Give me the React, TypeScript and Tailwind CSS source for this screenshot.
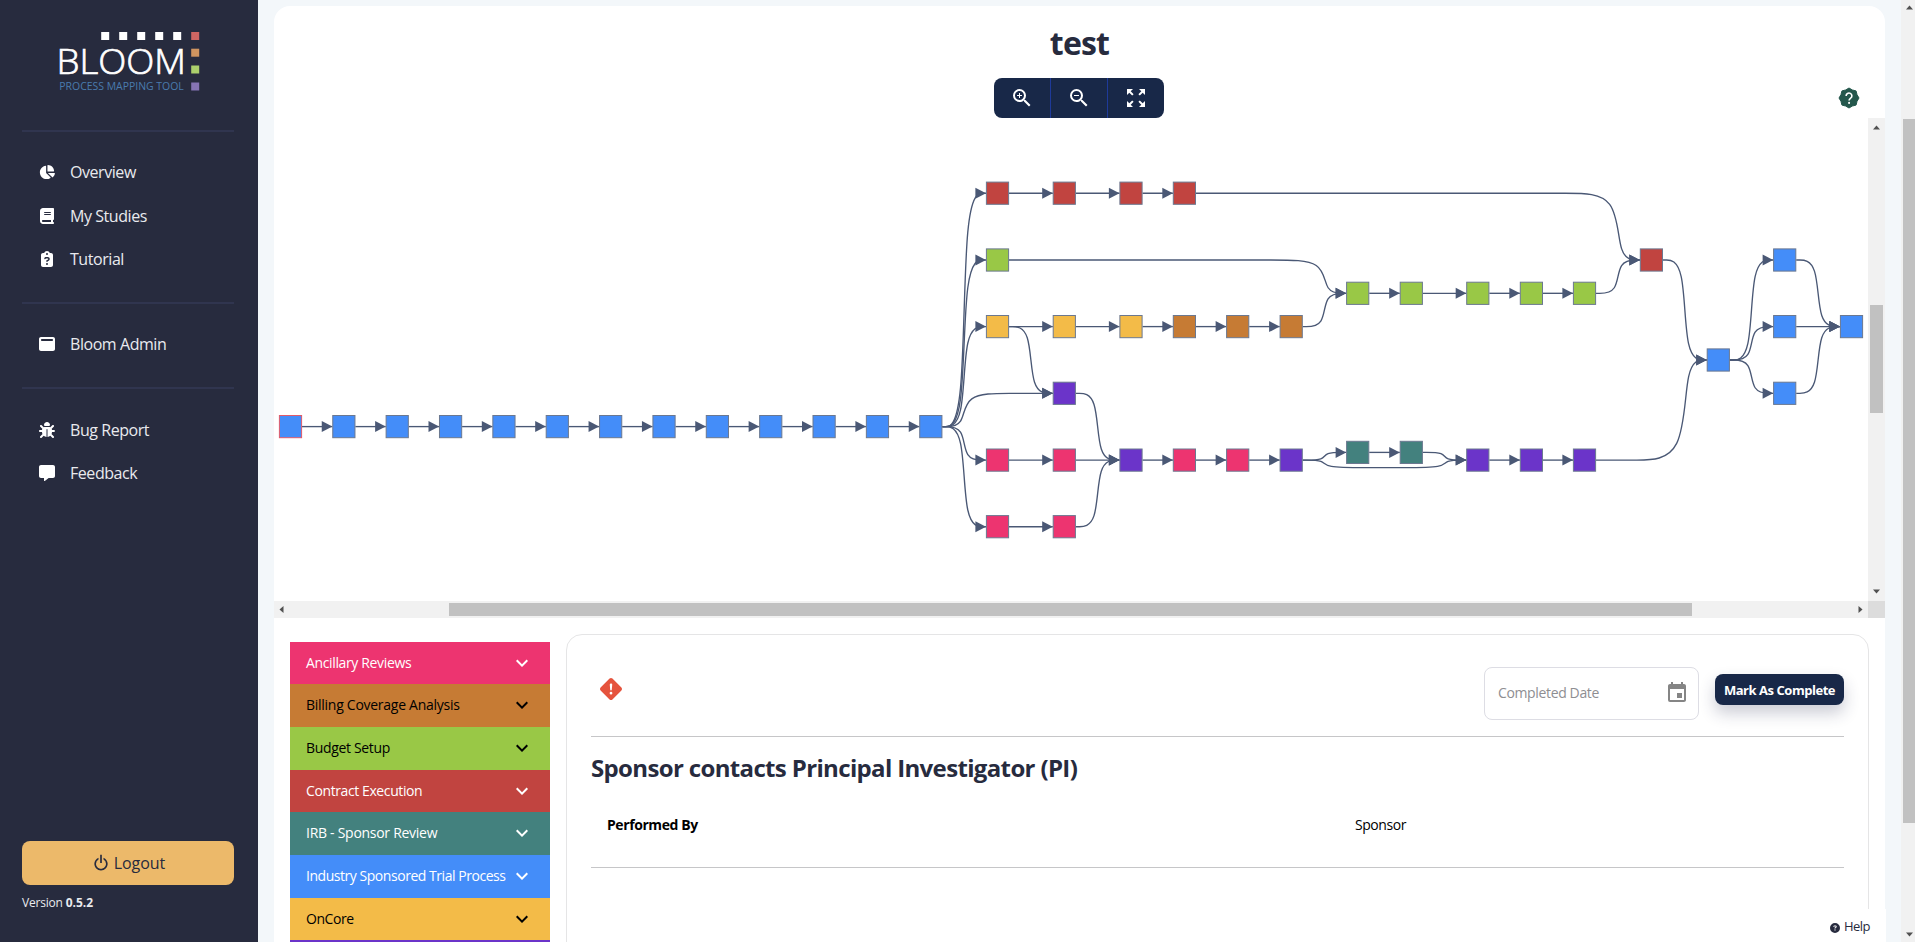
import React from "react";
import type { IconType } from "react-icons";
import {
  FaBook,
  FaBug,
  FaChartPie,
  FaCircleQuestion,
  FaClipboardQuestion,
  FaMessage,
  FaWindowMaximize,
} from "react-icons/fa6";
import { BsExclamationDiamondFill } from "react-icons/bs";
import { BiPowerOff } from "react-icons/bi";
import { MdEvent, MdExpandMore, MdZoomIn, MdZoomOut, MdZoomOutMap } from "react-icons/md";

type NavItem = { label: string; Icon: IconType };

const NAV_GROUPS: NavItem[][] = [
  [
    { label: "Overview", Icon: FaChartPie },
    { label: "My Studies", Icon: FaBook },
    { label: "Tutorial", Icon: FaClipboardQuestion },
  ],
  [{ label: "Bloom Admin", Icon: FaWindowMaximize }],
  [
    { label: "Bug Report", Icon: FaBug },
    { label: "Feedback", Icon: FaMessage },
  ],
];

const CATEGORIES = [
  { label: "Ancillary Reviews", style: "h-[42px] bg-[#ed3470] text-white tracking-[-0.36px]" },
  { label: "Billing Coverage Analysis", style: "h-[43px] pb-px bg-[#c67b34] text-black tracking-[-0.27px]" },
  { label: "Budget Setup", style: "h-[43px] pb-px bg-[#99c846] text-black tracking-[-0.34px]" },
  { label: "Contract Execution", style: "h-[42px] bg-[#c14440] text-white tracking-[-0.4px]" },
  { label: "IRB - Sponsor Review", style: "h-[43px] pb-px bg-[#43817e] text-white tracking-[-0.28px]" },
  { label: "Industry Sponsored Trial Process", style: "h-[43px] pb-px bg-[#448df9] text-white tracking-[-0.46px]" },
  { label: "OnCore", style: "h-[42px] bg-[#f3bb48] text-black tracking-[-0.45px]" },
];

function Logo() {
  const white = [105, 123, 141, 159, 177];
  const tail = [
    { y: 36, c: "#cf6663" },
    { y: 52.7, c: "#cf9460" },
    { y: 69.5, c: "#abcf6c" },
    { y: 86.5, c: "#8674b4" },
  ];
  return (
    <svg className="h-[130px] w-[258px] shrink-0" viewBox="0 0 258 130">
      {white.map((x) => (
        <rect key={x} x={x - 3.8} y={32} width={8} height={8} fill="#fff" />
      ))}
      {tail.map((s) => (
        <rect key={s.y} x={191.2} y={s.y - 4} width={8} height={8} fill={s.c} />
      ))}
      <text x="56.5" y="74.2" fontFamily="Open Sans" fontWeight="300" fontSize="34.5" textLength="129.5" lengthAdjust="spacingAndGlyphs" fill="#fff" stroke="#fff" strokeWidth="0.7">
        BLOOM
      </text>
      <text x="59.3" y="90.2" fontFamily="Open Sans" fontWeight="400" fontSize="11" textLength="124.5" lengthAdjust="spacingAndGlyphs" fill="#4a7bae">
        PROCESS MAPPING TOOL
      </text>
    </svg>
  );
}

function Sidebar() {
  return (
    <aside className="flex h-full w-[258px] shrink-0 flex-col bg-[#272b3e]">
      <Logo />
      <nav className="flex flex-col pr-6 pl-[22px]">
        {NAV_GROUPS.map((group, i) => (
          <div key={i} className="flex flex-col border-t-2 border-[#30354f] pt-[18.5px] pb-[21.2px]">
            {group.map(({ label, Icon }) => (
              <a key={label} className="flex h-[43.5px] items-center pl-[17px] text-base text-[#e9eaee]">
                <Icon className="h-4 w-4 text-white" />
                <span className="ml-[15px] tracking-[-0.44px]">{label}</span>
              </a>
            ))}
          </div>
        ))}
      </nav>
      <div className="mt-auto flex flex-col pr-6 pb-[29px] pl-[22px]">
        <button className="flex h-11 items-center justify-center gap-[3px] rounded-lg bg-[#ecb96a] text-base font-medium text-[#272b3e]">
          <BiPowerOff className="h-5 w-5" />
          <span className="tracking-[-0.05px]">Logout</span>
        </button>
        <p className="mt-2 text-xs leading-5 font-medium tracking-[-0.2px] text-[#e9eaee]">
          Version <span className="font-bold tracking-normal">0.5.2</span>
        </p>
      </div>
    </aside>
  );
}

const COLORS = {
  blue: "#448df9",
  red: "#c14440",
  lime: "#99c846",
  amber: "#f3bb48",
  brown: "#c67b34",
  violet: "#6b34c9",
  pink: "#ed3470",
  teal: "#43817e",
};

type StepNode = { x: number; y: number; color: keyof typeof COLORS };

const row = (color: keyof typeof COLORS, y: number, xs: number[]): StepNode[] =>
  xs.map((x) => ({ x, y, color }));

const TRUNK = Array.from({ length: 13 }, (_, i) => 290.5 + i * 53.36);

const NODES: StepNode[] = [
  ...row("blue", 426.6, TRUNK),
  ...row("red", 193.2, [997.5, 1064.3, 1131, 1184.4]),
  ...row("red", 260, [1651.4]),
  ...row("lime", 260, [997.5]),
  ...row("lime", 293.3, [1357.7, 1411.3, 1477.8, 1531.4, 1584.5]),
  ...row("amber", 326.6, [997.5, 1064.3, 1131]),
  ...row("brown", 326.6, [1184.4, 1237.7, 1291.2]),
  ...row("violet", 393.3, [1064.3]),
  ...row("pink", 460.1, [997.5, 1064.3]),
  ...row("violet", 460.1, [1131]),
  ...row("pink", 460.1, [1184.4, 1237.7]),
  ...row("violet", 460.1, [1291.2, 1477.8, 1531.4, 1584.5]),
  ...row("pink", 526.7, [997.5, 1064.3]),
  ...row("teal", 452.4, [1357.7, 1411.3]),
  ...row("blue", 360, [1718.3]),
  ...row("blue", 260, [1784.7]),
  ...row("blue", 326.6, [1784.7, 1851.5]),
  ...row("blue", 393.3, [1784.7]),
];

type Point = [number, number];

/** Uniform cubic B-spline through the control polygon, clamped at both ends. */
function basis(points: Point[]): string {
  const at = (i: number) => points[Math.max(0, Math.min(points.length - 1, i))];
  let d = `M${points[0][0]},${points[0][1]}`;
  for (let i = 0; i < points.length; i++) {
    const [a, b, c] = [at(i - 1), at(i), at(i + 1)];
    if (i === 0) {
      d += `L${(5 * b[0] + c[0]) / 6},${(5 * b[1] + c[1]) / 6}`;
      continue;
    }
    d += `C${(2 * a[0] + b[0]) / 3},${(2 * a[1] + b[1]) / 3} ${(a[0] + 2 * b[0]) / 3},${(a[1] + 2 * b[1]) / 3} ${(a[0] + 4 * b[0] + c[0]) / 6},${(a[1] + 4 * b[1] + c[1]) / 6}`;
  }
  const end = points[points.length - 1];
  return `${d}L${end[0]},${end[1]}`;
}

const R = 11.5;
const straight = (xs: number[], y: number): Point[][] =>
  xs.slice(1).map((x, i) => [
    [xs[i] + R, y],
    [x - R, y],
  ]);
const step = (x0: number, y0: number, x1: number, y1: number): Point[] => {
  const xm = (x0 + x1) / 2;
  return [[x0 + R, y0], [xm, y0], [xm, y1], [x1 - R, y1]];
};

const FORK = 930.8;

const EDGES: Point[][] = [
  ...straight(TRUNK, 426.6),
  ...straight([997.5, 1064.3, 1131, 1184.4], 193.2),
  ...straight([1357.7, 1411.3, 1477.8, 1531.4, 1584.5], 293.3),
  ...straight([997.5, 1064.3, 1131, 1184.4, 1237.7, 1291.2], 326.6),
  ...straight([997.5, 1064.3, 1131, 1184.4, 1237.7, 1291.2], 460.1),
  ...straight([1477.8, 1531.4, 1584.5], 460.1),
  ...straight([1357.7, 1411.3], 452.4),
  ...straight([997.5, 1064.3], 526.7),
  ...straight([1784.7, 1851.5], 326.6),
  step(FORK, 426.6, 997.5, 193.2),
  step(FORK, 426.6, 997.5, 260),
  step(FORK, 426.6, 997.5, 326.6),
  step(FORK, 426.6, 997.5, 460.1),
  step(FORK, 426.6, 997.5, 526.7),
  [[FORK + R, 426.6], [964.2, 426.6], [964.2, 393.3], [1010, 393.3], [1052.8, 393.3]],
  step(997.5, 326.6, 1064.3, 393.3),
  step(1064.3, 393.3, 1131, 460.1),
  step(1064.3, 526.7, 1131, 460.1),
  [[1195.9, 193.2], [1500, 193.2], [1568, 193.2], [1618, 193.2], [1618, 260], [1639.9, 260]],
  [[1009, 260], [1200, 260], [1275, 260], [1324.5, 260], [1324.5, 293.3], [1346.2, 293.3]],
  step(1291.2, 326.6, 1357.7, 293.3),
  step(1291.2, 460.1, 1357.7, 452.4),
  [[1302.7, 460.1], [1324.5, 460.1], [1324.5, 467.6], [1366, 467.6], [1403, 467.6], [1444.5, 467.6], [1444.5, 460.1], [1466.3, 460.1]],
  step(1411.3, 452.4, 1477.8, 460.1),
  step(1584.5, 293.3, 1651.4, 260),
  step(1651.4, 260, 1718.3, 360),
  [[1596, 460.1], [1635, 460.1], [1685, 460.1], [1685, 360], [1706.8, 360]],
  step(1718.3, 360, 1784.7, 260),
  step(1718.3, 360, 1784.7, 326.6),
  step(1718.3, 360, 1784.7, 393.3),
  step(1784.7, 260, 1851.5, 326.6),
  step(1784.7, 393.3, 1851.5, 326.6),
];

function ProcessGraph() {
  return (
    <svg className="block h-[483px] w-[1594px]" viewBox="274 118 1594 483">
      <g fill="none" stroke="#4a5875" strokeWidth="1.35">
        {EDGES.map((points, i) => (
          <path key={i} d={basis(points)} />
        ))}
      </g>
      <g fill="#4a5875">
        {EDGES.map((points, i) => {
          const [x, y] = points[points.length - 1];
          return <path key={i} d={`M${x},${y}l-10.6,-5.5v11z`} />;
        })}
      </g>
      <g strokeWidth="1">
        {NODES.map((n, i) => (
          <rect key={i} x={n.x - 11.1} y={n.y - 11.1} width={22.2} height={22.2} fill={COLORS[n.color]} stroke={i === 0 ? "#e05a6a" : "#6b7890"} />
        ))}
      </g>
    </svg>
  );
}

function Arrow({ points }: { points: string }) {
  return (
    <svg className="h-[9px] w-[9px] shrink-0" viewBox="0 0 9 9">
      <polygon points={points} fill="#505050" />
    </svg>
  );
}

const UP = "1,6.5 4.5,2.5 8,6.5";
const DOWN = "1,2.5 4.5,6.5 8,2.5";
const LEFT = "6.5,1 2.5,4.5 6.5,8";
const RIGHT = "2.5,1 6.5,4.5 2.5,8";

function GraphArea() {
  return (
    <div className="flex h-[500px] shrink-0 flex-col">
      <div className="flex">
        <ProcessGraph />
        <div className="flex h-[483px] w-[17px] flex-col items-center bg-[#f1f1f1] pt-[5px] pb-[5px]">
          <Arrow points={UP} />
          <div className="mt-[173px] h-[108px] w-[13px] bg-[#c1c1c1]" />
          <div className="mt-auto">
            <Arrow points={DOWN} />
          </div>
        </div>
      </div>
      <div className="flex h-[17px]">
        <div className="flex w-[1594px] items-center justify-between bg-[#f1f1f1] pr-[3px] pl-[3px]">
          <div className="flex items-center">
            <Arrow points={LEFT} />
            <div className="ml-[163px] h-[13px] w-[1243px] bg-[#c1c1c1]" />
          </div>
          <Arrow points={RIGHT} />
        </div>
        <div className="w-[17px] bg-[#dcdcdc]" />
      </div>
    </div>
  );
}

function HelpBadge() {
  const outline = Array.from({ length: 16 }, (_, i) => {
    const a = (i * Math.PI) / 8 - Math.PI / 2;
    const r = i % 2 === 0 ? 10 : 8.7;
    return `${(11 + r * Math.cos(a)).toFixed(2)},${(11 + r * Math.sin(a)).toFixed(2)}`;
  }).join(" ");
  return (
    <svg className="h-[22px] w-[22px]" viewBox="0 0 22 22">
      <polygon points={outline} fill="#24574c" stroke="#24574c" strokeWidth="1" strokeLinejoin="round" />
      <path d="M8.1 8.9a2.9 2.8 0 1 1 4.5 2.3c-.9.7-1.5 1.1-1.5 2.2" fill="none" stroke="#fff" strokeWidth="1.6" />
      <circle cx="11.1" cy="15.9" r="1.05" fill="#fff" />
    </svg>
  );
}

function Header() {
  return (
    <header className="flex h-[112px] shrink-0 items-start">
      <div className="w-[720px]" />
      <div className="flex w-[170px] flex-col items-center">
        <h1 className="mt-[14px] h-[58px] pl-px text-[32px] leading-[46px] font-bold tracking-[-0.8px] text-[#272b3e]">test</h1>
        <div className="flex h-10 w-[170px] divide-x divide-[#1e3a9a] overflow-hidden rounded-lg bg-[#182848] text-white">
          {[MdZoomIn, MdZoomOut, MdZoomOutMap].map((Icon, i) => (
            <button key={i} className="flex flex-1 items-center justify-center">
              <Icon className="h-6 w-6" />
            </button>
          ))}
        </div>
      </div>
      <div className="ml-auto mt-[81px] mr-[25px]">
        <HelpBadge />
      </div>
    </header>
  );
}

function CategoryList() {
  return (
    <div className="mt-6 ml-4 flex w-[260px] shrink-0 flex-col">
      {CATEGORIES.map((c) => (
        <div key={c.label} className={`flex shrink-0 items-center justify-between pr-4 pl-4 text-sm whitespace-nowrap ${c.style}`}>
          <span>{c.label}</span>
          <MdExpandMore className="h-6 w-6 shrink-0" />
        </div>
      ))}
      <div className="h-[42px] shrink-0 bg-[#6b34c9]" />
    </div>
  );
}

function DetailPanel() {
  return (
    <section className="mt-4 ml-4 flex h-[400px] w-[1303px] shrink-0 flex-col rounded-t-2xl border border-[#e5e5e6] px-6">
      <div className="flex h-[102px] items-start border-b border-[#c6c6c8]">
        <BsExclamationDiamondFill className="mt-[43px] ml-[9px] h-[22px] w-[22px] text-[#e5533d]" />
        <div className="mt-8 ml-auto flex h-[53px] w-[215px] items-center justify-between rounded-lg border border-[#dddde4] pr-[9px] pb-px pl-[13px] text-sm text-[#8e8e92]">
          <span className="tracking-[-0.36px]">Completed Date</span>
          <MdEvent className="h-6 w-6 text-[#858585]" />
        </div>
        <button className="mt-[39px] ml-4 h-[31px] w-[129px] rounded-lg bg-[#182848] text-[13px] leading-[30px] font-bold tracking-[-0.46px] whitespace-nowrap text-white shadow-[0_8px_16px_rgba(39,43,80,0.24)]">
          Mark As Complete
        </button>
      </div>
      <div className="flex h-[131px] shrink-0 flex-col border-b border-[#c6c6c8]">
        <h2 className="mt-[13px] text-2xl leading-9 font-bold tracking-[-0.65px] text-[#272b3e]">
          Sponsor contacts Principal Investigator (PI)
        </h2>
        <div className="mt-[29px] flex pl-4 text-sm leading-5 text-black">
          <span className="w-[748px] font-bold tracking-[-0.42px]">Performed By</span>
          <span className="tracking-[-0.45px]">Sponsor</span>
        </div>
      </div>
    </section>
  );
}

export default function App() {
  return (
    <div className="relative flex h-[942px] w-[1915px] overflow-hidden bg-[#f3f7fa] font-['Open_Sans',sans-serif]">
      <Sidebar />
      <main className="mt-[6px] ml-4 flex h-[936px] w-[1611px] flex-col overflow-hidden rounded-t-2xl bg-white">
        <Header />
        <GraphArea />
        <div className="flex flex-1 overflow-hidden">
          <CategoryList />
          <DetailPanel />
        </div>
      </main>
      <div className="ml-4 flex h-full w-[14px] flex-col items-end bg-[#f1f1f1]">
        <div className="h-[119px] pt-[3px] pr-[1px]">
          <Arrow points={UP} />
        </div>
        <div className="h-[704px] w-3 bg-[#c1c1c1]" />
        <div className="mt-auto pr-[1px] pb-[3px]">
          <Arrow points={DOWN} />
        </div>
      </div>
      <div className="absolute right-[29px] bottom-0 flex h-[33px] w-[66px] items-center gap-[4px] bg-white pt-[3px] pl-[10px] text-[13px] text-[#272b3e]">
        <FaCircleQuestion className="mt-[2px] h-[10px] w-[10px]" />
        <span className="tracking-[-0.55px]">Help</span>
      </div>
    </div>
  );
}
